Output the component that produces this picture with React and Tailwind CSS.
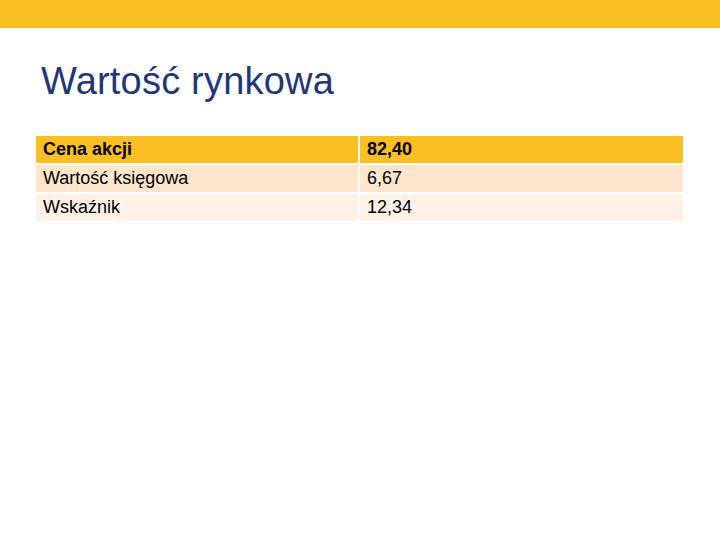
const cells = [
  { text: "Cena akcji", bg: "bg-[#fac023]", bold: true },
  { text: "82,40", bg: "bg-[#fac023]", bold: true },
  { text: "Wartość księgowa", bg: "bg-[#fde6cc]" },
  { text: "6,67", bg: "bg-[#fde6cc]" },
  { text: "Wskaźnik", bg: "bg-[#fef2e7]" },
  { text: "12,34", bg: "bg-[#fef2e7]" },
];

export default function App() {
  return (
    <div className="w-[720px] h-[540px] bg-white font-['Liberation_Sans',Arial,sans-serif] overflow-hidden">
      <div className="h-[28px] bg-[#fac023]" />
      <h1 className="mt-[34px] ml-[41px] text-[38px] leading-[38px] tracking-[0.2px] text-[#223777]">
        Wartość rynkowa
      </h1>
      {/* table */}
      <div className="mt-[36px] ml-[36px] w-[647px] grid grid-cols-[322px_323px] gap-[2px] text-[18px] text-black">
        {cells.map((c) => (
          <div
            key={c.text}
            className={`h-[27px] ${c.bg} pl-[7px] flex items-center ${c.bold ? "font-bold" : ""}`}
          >
            {c.text}
          </div>
        ))}
      </div>
    </div>
  );
}
